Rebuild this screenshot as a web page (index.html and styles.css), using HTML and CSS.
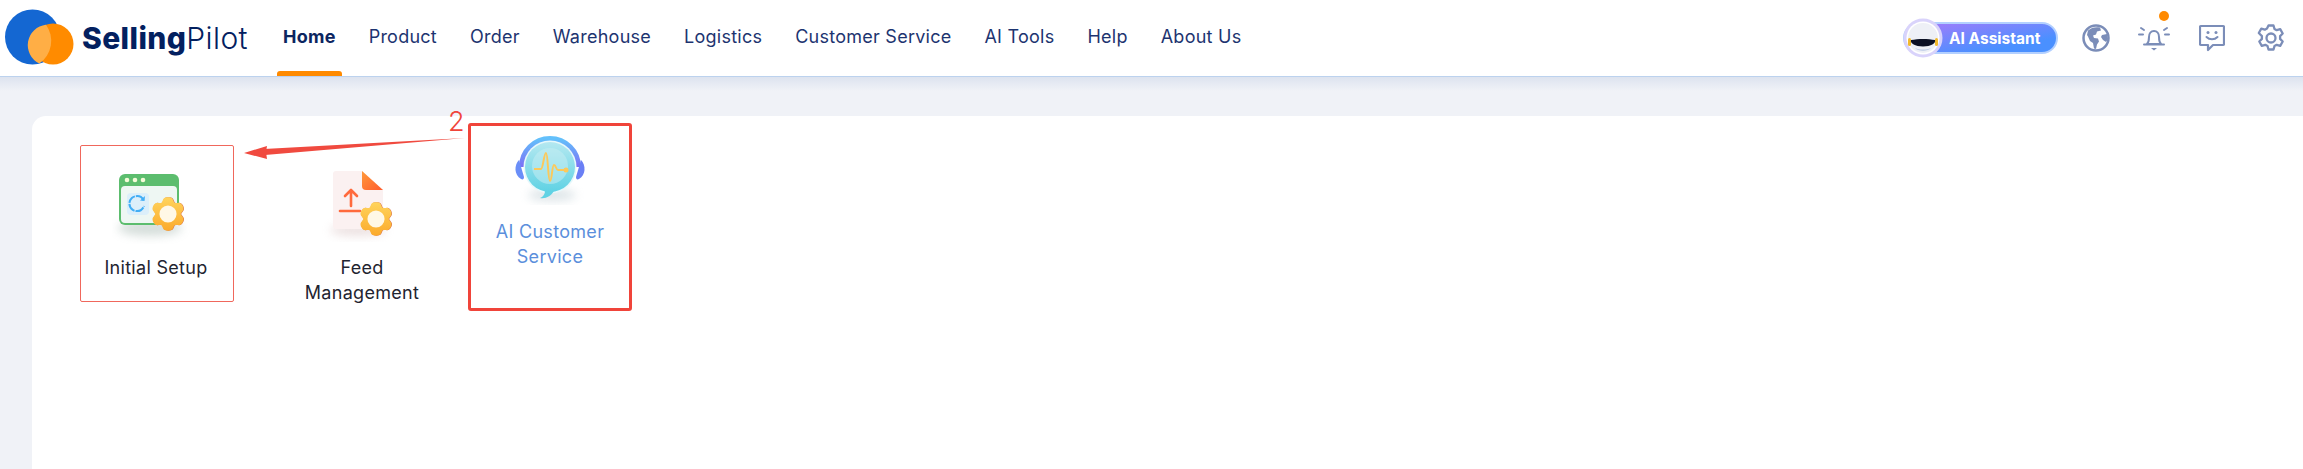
FILE: index.html
```html
<!DOCTYPE html>
<html lang="en">
<head>
<meta charset="utf-8">
<title>SellingPilot</title>
<link rel="stylesheet" href="styles.css">
</head>
<body>
<svg class="defs" width="0" height="0" aria-hidden="true">
  <defs>
    <linearGradient id="gearFill" x1="0" y1="0" x2="0" y2="1"><stop offset="0" stop-color="#ffd45c"/><stop offset="1" stop-color="#fbaa2c"/></linearGradient>
    <linearGradient id="headset" x1="0" y1="0" x2="0" y2="1"><stop offset="0" stop-color="#63c0fb"/><stop offset="1" stop-color="#7c6ff5"/></linearGradient>
    <linearGradient id="bubble" x1="0" y1="0" x2="0" y2="1"><stop offset="0" stop-color="#b4e8f0"/><stop offset="1" stop-color="#5fd2e4"/></linearGradient>
    <linearGradient id="fold" x1="0" y1="0" x2="1" y2="1"><stop offset="0" stop-color="#ff9a3a"/><stop offset="1" stop-color="#ff5c2e"/></linearGradient>
    <filter id="soft" x="-50%" y="-50%" width="200%" height="200%"><feGaussianBlur stdDeviation="5"/></filter>
    <symbol id="cog" viewBox="0 0 40 40">
      <path d="M15 3c2-2 8-2 10 0l2 4.500c2 .5 3 .5 5 0 3 0 6 5 5 8l-3 4.500 3 4.500c1 3-2 8-5 8-2-.5-3-.5-5 0l-2 4.500c-2 2-8 2-10 0l-2-4.500c-2-.5-3-.5-5 0-3 0-6-5-5-8l3-4.500-3-4.500c-1-3 2-8 5-8 2 .5 3 .5 5 0z" fill="#d9724a" transform="translate(.6 0)"/>
      <path d="M15 3c2-2 8-2 10 0l2 4.500c2 .5 3 .5 5 0 3 0 6 5 5 8l-3 4.500 3 4.500c1 3-2 8-5 8-2-.5-3-.5-5 0l-2 4.500c-2 2-8 2-10 0l-2-4.500c-2-.5-3-.5-5 0-3 0-6-5-5-8l3-4.500-3-4.500c-1-3 2-8 5-8 2 .5 3 .5 5 0z" fill="url(#gearFill)"/>
      <circle cx="20" cy="20" r="9.500" fill="#fff8e6"/>
    </symbol>
  </defs>
</svg>

<header class="topbar">
  <div class="brand">
    <svg class="brand-mark" width="72" height="58" viewBox="0 0 72 58">
      <circle cx="27.500" cy="28" r="27.500" fill="#1467d2"/>
      <circle cx="48" cy="35" r="20.500" fill="#ff8b00"/>
      <path d="M41 15.700a27.500 27.500 0 0 1 -6.700 38.800 20.500 20.500 0 0 1 6.700-38.800z" fill="#ffae45"/>
    </svg>
    <span class="brand-name"><b>Selling</b>Pilot</span>
  </div>
  <nav class="nav">
    <a class="nav-item is-active">Home</a>
    <a class="nav-item">Product</a>
    <a class="nav-item">Order</a>
    <a class="nav-item">Warehouse</a>
    <a class="nav-item">Logistics</a>
    <a class="nav-item">Customer Service</a>
    <a class="nav-item">AI Tools</a>
    <a class="nav-item">Help</a>
    <a class="nav-item">About Us</a>
  </nav>
  <div class="tools">
    <div class="assistant">
      <svg class="assistant-face" width="40" height="40" viewBox="0 0 40 40">
        <circle cx="20" cy="20" r="19.500" fill="#d9d3fb"/>
        <circle cx="20" cy="20" r="16.500" fill="#fff"/>
        <circle cx="20" cy="20" r="15" fill="#eef0f6"/>
        <rect x="5" y="20" width="3" height="8" rx="1.500" fill="#f2b92c"/>
        <rect x="32" y="20" width="3" height="8" rx="1.500" fill="#f2b92c"/>
        <path d="M8 22c7-1.500 17-1.500 24 0 1 3.500-4 6.500-12 6.500S7 25.500 8 22z" fill="#0b1024"/>
        <path d="M12 30c5 2 11 2 16 0-3 3.500-13 3.500-16 0z" fill="#b9c8e6"/>
      </svg>
      <span class="assistant-label">AI Assistant</span>
    </div>
    <svg class="tool" width="28" height="28" viewBox="0 0 28 28">
      <circle cx="14" cy="14" r="12.500" fill="none" stroke="#7b8db8" stroke-width="2.500"/>
      <path d="M6 6.500c3-3 8-4 12-3l1 3-4 1-1 3-3 1 1 2.500 4 .5 1 3-2 3-1 4.500-2-.5-1-5.500-3-2-2-4.500-1-1.500z" fill="#7b8db8"/>
      <path d="M20 11l5-1 1 5-2 3-3-2-2-3z" fill="#7b8db8"/>
    </svg>
    <div class="bell">
      <svg width="32" height="28" viewBox="0 0 32 28">
        <path d="M9 20c2-2 2-4 2-7 0-3.500 2-6 5-6s5 2.500 5 6c0 3 0 5 2 7z" fill="none" stroke="#7b8db8" stroke-width="2" stroke-linejoin="round"/>
        <path d="M6 20.500h20" stroke="#7b8db8" stroke-width="2" stroke-linecap="round"/>
        <path d="M13 24h6l-3 2.500z" fill="#7b8db8"/>
        <path d="M1 10.500h4M27 10.500h4M3 4l3 2M29 4l-3 2" stroke="#7b8db8" stroke-width="2" stroke-linecap="round"/>
      </svg>
      <span class="bell-dot"></span>
    </div>
    <svg class="tool tool-chat" width="26" height="28" viewBox="0 0 26 28">
      <path d="M2 2h22a1 1 0 0 1 1 1v17a1 1 0 0 1-1 1H14l-5 5v-5H2a1 1 0 0 1-1-1V3a1 1 0 0 1 1-1z" fill="none" stroke="#7b8db8" stroke-width="2.200" stroke-linejoin="round"/>
      <circle cx="9" cy="8.500" r="1.500" fill="#7b8db8"/>
      <circle cx="17" cy="8.500" r="1.500" fill="#7b8db8"/>
      <path d="M7.500 13c3 3 8 3 11 0" fill="none" stroke="#7b8db8" stroke-width="2" stroke-linecap="round"/>
    </svg>
    <svg class="tool" width="28" height="28" viewBox="0 0 28 28">
      <path d="M11.500 1.500h5l1 3.500 2.200 1.200 3.500-1 2.500 4.300-2.600 2.600v2.800l2.600 2.600-2.500 4.300-3.500-1-2.200 1.200-1 3.500h-5l-1-3.500-2.200-1.200-3.500 1-2.500-4.300 2.600-2.600v-2.800L1.800 9l2.500-4.300 3.500 1L10 4.500z" fill="none" stroke="#7b8db8" stroke-width="2.300" stroke-linejoin="round"/>
      <circle cx="14" cy="14" r="4.500" fill="none" stroke="#7b8db8" stroke-width="2.300"/>
    </svg>
  </div>
</header>

<main class="page">
  <section class="panel">
    <div class="app app-setup">
      <svg class="app-icon app-icon-setup" width="84" height="76" viewBox="0 0 84 76">
        <ellipse cx="38" cy="58" rx="32" ry="8" fill="#8aa39a" opacity=".35" filter="url(#soft)"/>
        <rect x="7" y="4" width="60" height="51" rx="6" fill="#5cbd6e"/>
        <rect x="9" y="16" width="56" height="37" rx="4" fill="#eef7f3"/>
        <circle cx="15" cy="10" r="2.300" fill="#f4fbd8"/>
        <circle cx="23" cy="10" r="2.300" fill="#f4fbd8"/>
        <circle cx="31" cy="10" r="2.300" fill="#f4fbd8"/>
        <rect x="15" y="23" width="22" height="22" rx="4" fill="#dceffa"/>
        <path d="M31.500 30a7.500 7.500 0 1 0 .5 6" fill="none" stroke="#42aef5" stroke-width="2" stroke-dasharray="9 1"/>
        <path d="M28 30.500l4.500.5.500-5z" fill="#42aef5"/>
        <use href="#cog" x="38" y="26" width="36" height="36"/>
      </svg>
      <span class="app-label">Initial Setup</span>
    </div>
    <div class="app app-feed">
      <svg class="app-icon" width="84" height="76" viewBox="0 0 84 76">
        <ellipse cx="38" cy="60" rx="28" ry="6" fill="#c9a9a9" opacity=".35" filter="url(#soft)"/>
        <path d="M16 1h26l21 19v36a3 3 0 0 1-3 3H16a3 3 0 0 1-3-3V4a3 3 0 0 1 3-3z" fill="#fbf1f1"/>
        <path d="M42 1l21 19H46a4 4 0 0 1-4-4z" fill="url(#fold)"/>
        <path d="M31 36V20M25 26l6-6 6 6" fill="none" stroke="#ff6a3d" stroke-width="2.600" stroke-linecap="round" stroke-linejoin="round"/>
        <path d="M20 41h20" stroke="#ff6a3d" stroke-width="2.600" stroke-linecap="round"/>
        <use href="#cog" x="38" y="31" width="36" height="36"/>
      </svg>
      <span class="app-label">Feed Management</span>
    </div>
  </section>

  <div class="note-pick">
    <svg class="app-icon" width="76" height="72" viewBox="0 0 76 72">
      <ellipse cx="40" cy="62" rx="24" ry="6" fill="#9db4bd" opacity=".35" filter="url(#soft)"/>
      <path d="M10 34a28 28 0 0 1 56 0" fill="none" stroke="url(#headset)" stroke-width="6"/>
      <path d="M7 27c-5 5-5 15 2 19 2 1 3 0 3-2z" fill="#6a8ef8"/>
      <path d="M69 27c5 5 5 15-2 19-2 1-3 0-3-2z" fill="#6a7ff5"/>
      <circle cx="38" cy="34" r="26.500" fill="#e6f8fb"/>
      <circle cx="38" cy="34" r="25" fill="url(#bubble)"/>
      <path d="M33 58c0 3-2 6-5 7 6 1 11-2 14-7z" fill="#5fd2e4"/>
      <circle cx="38" cy="33" r="18" fill="#c4ecf2" opacity=".55"/>
      <path d="M22 36h7c2 0 3-16 5-16s2 28 4 28 2-16 4-16 2 5 4 5h7" fill="none" stroke="#fcc95b" stroke-width="2" stroke-linejoin="round"/>
      <circle cx="54" cy="37" r="2.500" fill="#fcc95b"/>
    </svg>
    <span class="app-label app-label-link">AI Customer Service</span>
  </div>

  <svg class="note-arrow" width="224" height="32" viewBox="0 0 224 32">
    <path d="M222 1L21 12l1 6z" fill="#f04a3f"/>
    <path d="M1 16l23-7-1 6 1 7z" fill="#f04a3f"/>
  </svg>
  <span class="note-step">2</span>
</main>
</body>
</html>
```
FILE: styles.css
```css
* { box-sizing: border-box; }
html, body { margin: 0; height: 100%; overflow: hidden; }
body {
  background: #f0f2f7;
  font-family: Inter, "Open Sans", sans-serif;
  color: #14244f;
}
.defs { position: absolute; }

.topbar {
  height: 77px;
  display: flex;
  align-items: center;
  background: #fff;
  border-bottom: 1px solid #bcd2ee;
  padding-left: 5px;
}
.brand { display: flex; align-items: center; width: 278px; height: 100%; }
.brand-mark { flex: none; margin-top: 0; }
.brand-name {
  margin-left: 5px;
  font-size: 30px;
  color: #03205f;
  letter-spacing: 0.4px;
  font-weight: 300;
}
.brand-name b { font-weight: 800; }

.nav { display: flex; gap: 33px; height: 100%; }
.nav-item {
  position: relative;
  display: flex;
  align-items: center;
  font-size: 18px;
  letter-spacing: 0.25px;
  color: #1d3470;
  padding-bottom: 3px;
}
.nav-item.is-active { font-weight: 700; color: #0c2560; }
.nav-item.is-active::after {
  content: "";
  position: absolute;
  left: -6px;
  right: -6px;
  bottom: 0;
  height: 5px;
  border-radius: 3px 3px 0 0;
  background: #ff8a00;
}

.tools { margin-left: auto; display: flex; align-items: center; padding-right: 18px; }
.assistant {
  width: 155px;
  height: 32px;
  display: flex;
  align-items: center;
  position: relative;
  border: 2px solid #b3d0ff;
  border-radius: 16px;
  background: linear-gradient(to bottom right, #9a7dfb 10%, #4a90ff 75%);
  margin-right: 24px;
}
.assistant-face { position: absolute; left: -2px; top: -6px; }
.assistant-label {
  margin-left: 44px;
  color: #fff;
  font-size: 15.500px;
  font-weight: 700;
  white-space: nowrap;
}
.tool { flex: none; }
.bell { position: relative; width: 32px; height: 28px; margin: 0 29px 0 28px; }
.bell svg { display: block; }
.bell-dot {
  position: absolute;
  top: -13px;
  left: 21px;
  width: 10px;
  height: 10px;
  border-radius: 50%;
  background: #ff8a00;
}
.tool-chat { margin-right: 32px; }

.page {
  position: relative;
  height: calc(100% - 77px);
  padding: 39px 0 0 32px;
  background: linear-gradient(#dde3ef, #f0f2f7 14px) no-repeat;
}
.panel {
  height: 100%;
  background: #fff;
  border-radius: 14px 0 0 0;
  padding: 29px 0 0 48px;
  display: flex;
  gap: 51px;
  align-items: flex-start;
}
.app {
  width: 154px;
  height: 157px;
  display: flex;
  flex-direction: column;
  align-items: center;
  text-align: center;
}
.app-setup { border: 1.500px solid #f0675c; border-radius: 2px; padding: 24px 2px 0 0; }
.app-feed { padding: 25px 10px 0; }
.app-icon { flex: none; display: block; }
.app-icon-setup { margin-right: 4px; }
.app-label {
  margin-top: 9px;
  font-size: 18px;
  letter-spacing: 0.3px;
  line-height: 25px;
  color: #1f2430;
}
.note-pick {
  position: absolute;
  left: 468px;
  top: 46px;
  width: 164px;
  height: 188px;
  border: 3px solid #f0443a;
  border-radius: 3px;
  background: #fff;
  display: flex;
  flex-direction: column;
  align-items: center;
  text-align: center;
  padding: 7px 10px 0;
}
.app-label-link { margin-top: 14px; color: #5b8fdc; }
.note-arrow { position: absolute; left: 243px; top: 60px; }
.note-step {
  position: absolute;
  left: 448px;
  top: 29px;
  font-size: 27px;
  font-weight: 300;
  line-height: 32px;
  color: #f0443a;
}
```
